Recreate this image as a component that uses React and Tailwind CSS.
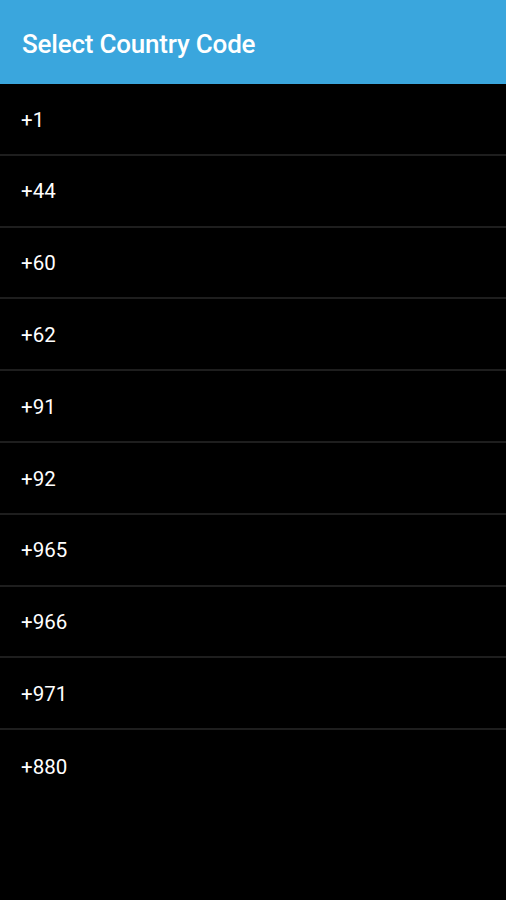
import React from 'react';

const codes = ['+1', '+44', '+60', '+62', '+91', '+92', '+965', '+966', '+971', '+880'];

export default function App() {
  return (
    <div className="w-[506px] h-[900px] bg-black overflow-hidden" style={{ fontFamily: 'Roboto, "Liberation Sans", sans-serif' }}>
      <header className="h-[84px] bg-[#3aa6dd] flex items-center px-[22px] pt-[4px] shadow-[0_1px_2px_rgba(0,0,0,0.6)]">
        <h1 className="text-white text-[26px] font-medium tracking-[-0.2px]">Select Country Code</h1>
      </header>
      <ul>
        {codes.map((code, i) => (
          <li
            key={code}
            className={`h-[71.8px] flex items-center px-[21px] pt-[2px] text-white text-[20.5px] ${i < codes.length - 1 ? 'border-b-2 border-[#1e1e1e]' : ''}`}
          >
            {code}
          </li>
        ))}
      </ul>
    </div>
  );
}
